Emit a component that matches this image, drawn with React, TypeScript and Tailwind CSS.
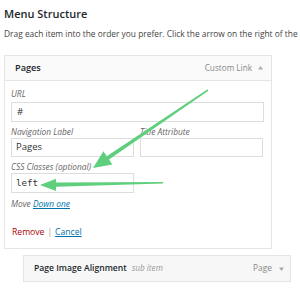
import React from "react";

export default function App() {
  const font = { fontFamily: '"Open Sans", "Noto Sans", sans-serif' };
  return (
    <div className="relative w-[300px] h-[288px] overflow-hidden bg-white text-[#444]" style={font}>
      <div className="pl-[4px] pt-[7px] text-[11px] leading-[14px] font-semibold text-[#23282d]">Menu Structure</div>
      <div className="pl-[4px] mt-[7px] text-[8.4px] leading-[12px] whitespace-nowrap text-[#444]">
        Drag each item into the order you prefer. Click the arrow on the right of the
      </div>
      <div className="ml-[4px] mt-[15px] w-[268px] border border-[#e5e5e5]">
        <div className="h-[25px] bg-[#fafafa] border-b border-[#e5e5e5] flex items-center pl-[10px] pr-[8px]">
          <span className="text-[9.2px] font-semibold text-[#23282d]">Pages</span>
          <span className="ml-auto text-[8.2px] text-[#888]">Custom Link</span>
          <svg className="ml-[6px]" width="5" height="4" viewBox="0 0 5 4">
            <polygon points="0,3.5 5,3.5 2.5,0" fill="#aaa" />
          </svg>
        </div>
        <div className="pl-[6px] pr-[7px] pt-[7px] pb-[10px]">
          <div className="text-[8.6px] leading-[12px] italic text-[#666]">URL</div>
          <div className="mt-[2px] h-[20px] border border-[#ddd] flex items-center pl-[5px] text-[9.5px] text-[#333]">#</div>
          <div className="mt-[4px] flex gap-[6px]">
            <div className="w-[123px]">
              <div className="text-[8.4px] leading-[12px] italic text-[#666]">Navigation Label</div>
              <div className="h-[19px] border border-[#ddd] flex items-center pl-[4px] text-[9.5px] text-[#333]">Pages</div>
            </div>
            <div className="w-[123px]">
              <div className="text-[8.4px] leading-[12px] italic text-[#666]">Title Attribute</div>
              <div className="h-[19px] border border-[#ddd]"></div>
            </div>
          </div>
          <div className="mt-[4px] text-[8.4px] leading-[12px] italic text-[#666]">CSS Classes (optional)</div>
          <div className="w-[123px] h-[20px] border border-[#ddd] flex items-center pl-[4px] text-[9.2px] text-[#333]" style={{ fontFamily: '"DejaVu Sans Mono", monospace' }}>left</div>
          <div className="mt-[5px] text-[8.4px] leading-[12px] italic">
            <span className="text-[#666]">Move </span>
            <span className="text-[#0073aa] underline">Down one</span>
          </div>
          <div className="mt-[16px] text-[8.6px] leading-[12px] flex items-center pl-[1px]">
            <span className="text-[#a00]">Remove</span>
            <span className="mx-[3px] text-[#999]">|</span>
            <span className="text-[#0073aa] underline">Cancel</span>
          </div>
        </div>
      </div>
      <div className="ml-[23px] mt-[6px] w-[268px] h-[27px] bg-[#f7f7f7] border border-[#e5e5e5] flex items-center pl-[10px] pr-[6px]">
        <span className="text-[8.6px] font-semibold text-[#23282d]">Page Image Alignment</span>
        <span className="ml-[5px] text-[8.2px] italic text-[#999]">sub item</span>
        <span className="ml-auto text-[8.4px] text-[#888]">Page</span>
        <svg className="ml-[7px]" width="5" height="4" viewBox="0 0 5 4">
          <polygon points="0,0.5 5,0.5 2.5,4" fill="#aaa" />
        </svg>
      </div>
      <svg className="absolute left-0 top-0" width="300" height="288" viewBox="0 0 300 288">
        <polygon
          points="208.4,90.7 109,159.6 112.4,164.5 93,168 103.4,151.3 106.8,156.2 207.6,89.3"
          fill="#5fcf7e"
        />
        <polygon
          points="163,182 56,182.6 56,178.7 40,185 56,190.9 56,186.8 163,183.6"
          fill="#5fcf7e"
        />
      </svg>
    </div>
  );
}
